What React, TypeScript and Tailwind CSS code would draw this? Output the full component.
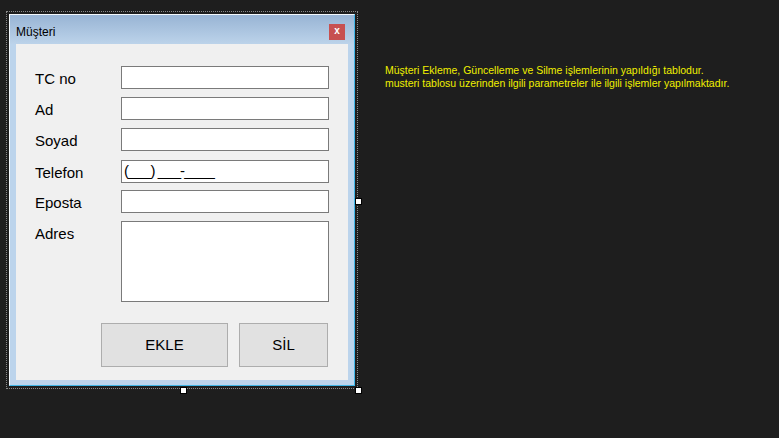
import React from 'react';

const fields = [
  { label: 'TC no', mt: 'mt-[22px]' },
  { label: 'Ad', mt: 'mt-[8px]' },
  { label: 'Soyad', mt: 'mt-[8px]' },
  { label: 'Telefon', mt: 'mt-[9px]', value: '(___) ___-____' },
  { label: 'Eposta', mt: 'mt-[7px]' },
];

function Handle({ className }: { className: string }) {
  return <div className={`absolute w-[7px] h-[7px] bg-white border border-black ${className}`} />;
}

export default function App() {
  return (
    <div className="w-[779px] h-[438px] bg-[#1e1e1e] flex items-start overflow-hidden font-['Liberation_Sans',Arial,sans-serif]">
      {/* designer selection frame */}
      <div className="relative ml-[6px] mt-[11px] border border-dotted border-[#8a8a8a] pt-[2px] pl-[2px] pr-[2px] pb-[2px]">
        <div className="w-[346px] h-[372px] bg-[#bcd4ec] border-t border-l border-t-[#f4f8fc] border-l-[#f4f8fc] border-r border-b border-r-[#3fb6e8] border-b-[#3fb6e8] flex flex-col">
          <div className="h-[29px] shrink-0 flex items-center justify-between pt-[4px] pl-[6px] pr-[9px] bg-gradient-to-b from-[#98b4d4] to-[#bcd3ea]">
            <span className="text-[12px] text-black">Müşteri</span>
            <div className="w-[16px] h-[16px] bg-[#c75050] flex items-center justify-center text-white text-[10px] font-bold leading-none pb-px">x</div>
          </div>
          <div className="mx-[6px] h-[336px] bg-[#f0f0f0] flex flex-col pl-[19px]">
            {fields.map((f) => (
              <div key={f.label} className={`flex ${f.mt}`}>
                <div className="w-[86px] h-[23px] leading-[23px] pt-px text-[15px] text-black">{f.label}</div>
                <div className="w-[208px] h-[23px] bg-white border border-[#7a7a7a] text-[15px] leading-[20px] pl-[2px] text-black tracking-[-0.9px] whitespace-pre">
                  {f.value ?? ''}
                </div>
              </div>
            ))}
            <div className="flex mt-[8px]">
              <div className="w-[86px] h-[23px] leading-[23px] pt-px text-[15px] text-black">Adres</div>
              <div className="w-[208px] h-[81px] bg-white border border-[#7a7a7a]" />
            </div>
            <div className="flex gap-[11px] ml-[66px] mt-[21px]">
              <button className="w-[127px] h-[44px] bg-[#e1e1e1] border border-[#adadad] text-[15px] text-black">EKLE</button>
              <button className="w-[89px] h-[44px] bg-[#e1e1e1] border border-[#adadad] text-[15px] text-black">SİL</button>
            </div>
          </div>
        </div>
        <Handle className="left-[348px] top-[186px]" />
        <Handle className="left-[173px] top-[375px]" />
        <Handle className="left-[348px] top-[375px]" />
      </div>
      <div className="ml-[27px] mt-[64px] text-[10.5px] leading-[13px] text-[#f0f000] whitespace-nowrap">
        <div>Müşteri Ekleme, Güncelleme ve Silme işlemlerinin yapıldığı tablodur.</div>
        <div>musteri tablosu üzerinden ilgili parametreler ile ilgili işlemler yapılmaktadır.</div>
      </div>
    </div>
  );
}
